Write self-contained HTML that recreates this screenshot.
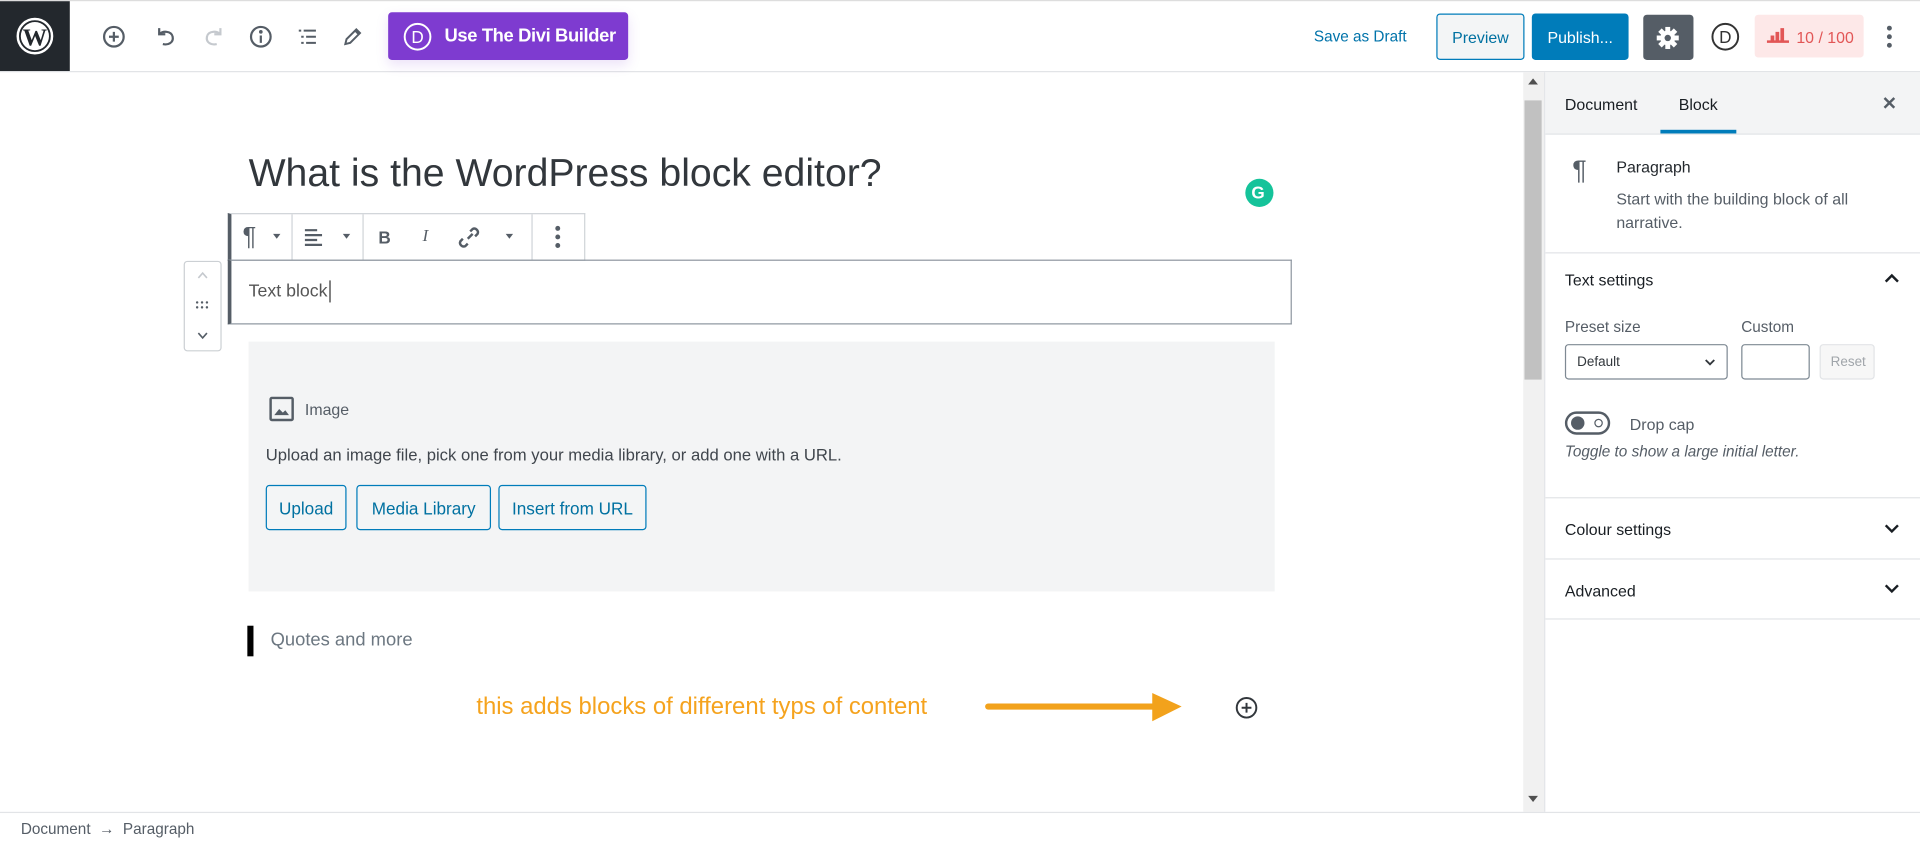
<!DOCTYPE html>
<html><head><meta charset="utf-8"><style>
*{box-sizing:border-box;margin:0;padding:0}
html,body{width:1920px;height:842px;overflow:hidden;background:#fff}
#w{position:absolute;left:0;top:0;width:1568px;height:688px;transform:scale(1.22449);transform-origin:0 0;font-family:"Liberation Sans",sans-serif;color:#23282d}
.a{position:absolute}
.t{position:absolute;white-space:nowrap;line-height:1}
svg{position:absolute;overflow:visible}
.btn{position:absolute;border:1px solid #007cba;border-radius:3px;color:#0071a1;font-size:14px;display:flex;align-items:center;justify-content:center;background:#f3f5f6}
.hr{position:absolute;left:1262px;width:306px;height:1px;background:#e2e4e7}
</style></head><body><div id="w">
<div class="a" style="left:0;top:0;width:1568px;height:1px;background:#ddd"></div>
<div class="a" style="left:0;top:58px;width:1568px;height:1px;background:#e2e4e7"></div>
<div class="a" style="left:0;top:1px;width:57px;height:57px;background:#23282d"></div>
<svg style="left:13px;top:14px" width="31" height="31" viewBox="0 0 31 31"><circle cx="15.5" cy="15.5" r="14" fill="none" stroke="#fff" stroke-width="2"/><circle cx="15.5" cy="15.5" r="11.5" fill="#fff"/><text x="15.5" y="23" text-anchor="middle" font-family="Liberation Serif" font-weight="bold" font-size="20" fill="#23282d">W</text></svg>
<svg style="left:84px;top:21px" width="18" height="18" viewBox="0 0 18 18" fill="none" stroke="#555d66" stroke-width="1.8"><circle cx="9" cy="9" r="8"/><path d="M9 5v8M5 9h8"/></svg>
<svg style="left:126px;top:21px" width="18" height="18" viewBox="0 0 18 18" fill="none" stroke="#555d66" stroke-width="1.8"><path d="M4 2v5h5"/><path d="M4 7c2-3 10-3 11 2s-4 7-8 6"/></svg>
<svg style="left:166px;top:21px" width="18" height="18" viewBox="0 0 18 18" fill="none" stroke="#c5c9ce" stroke-width="1.8"><path d="M14 2v5H9"/><path d="M14 7c-2-3-10-3-11 2s4 7 8 6"/></svg>
<svg style="left:204px;top:21px" width="18" height="18" viewBox="0 0 18 18" fill="none" stroke="#555d66" stroke-width="1.8"><circle cx="9" cy="9" r="8"/><path d="M9 8v6"/><circle cx="9" cy="5" r=".6" fill="#555d66"/></svg>
<svg style="left:243px;top:22px" width="16" height="16" viewBox="0 0 16 16" stroke="#555d66" stroke-width="1.6"><path d="M1 3h2M5 3h10M3 8h2M7 8h8M3 13h2M7 13h8"/></svg>
<svg style="left:280px;top:22px" width="16" height="16" viewBox="0 0 16 16" fill="none" stroke="#555d66" stroke-width="1.6"><path d="M2 14l1-4 8-8 3 3-8 8zM10 3l3 3"/></svg>
<div class="a" style="left:317px;top:10px;width:196px;height:39px;background:#7e3bd0;border-radius:3px;box-shadow:0 4px 10px rgba(126,59,208,.15)"></div>
<svg style="left:329px;top:18px" width="24" height="24" viewBox="0 0 24 24"><circle cx="12" cy="12" r="10.5" fill="none" stroke="#fff" stroke-width="1.6"/><text x="12" y="17" text-anchor="middle" font-size="14" fill="#fff" font-family="Liberation Sans">D</text></svg>
<div class="t" style="left:363px;top:22px;color:#fff;font-weight:bold;font-size:15px;letter-spacing:-0.3px">Use The Divi Builder</div>
<div class="t" style="left:1073px;top:24px;color:#0073aa;font-size:12.5px">Save as Draft</div>
<div class="btn" style="left:1173px;top:11px;width:72px;height:38px;font-size:13px">Preview</div>
<div class="btn" style="left:1251px;top:11px;width:79px;height:38px;background:#007cba;color:#fff;font-size:13px">Publish...</div>
<div class="a" style="left:1342px;top:12px;width:41px;height:37px;background:#555d66;border-radius:3px"></div>
<svg style="left:1352px;top:21px" width="20" height="20" viewBox="0 0 20 20"><g fill="#fff"><circle cx="10" cy="10" r="6"/><rect x="8" y="1" width="4" height="18"/><rect x="1" y="8" width="18" height="4"/><rect x="8" y="1" width="4" height="18" transform="rotate(45 10 10)"/><rect x="8" y="1" width="4" height="18" transform="rotate(-45 10 10)"/></g><circle cx="10" cy="10" r="2.6" fill="#555d66"/></svg>
<svg style="left:1397px;top:18px" width="24" height="24" viewBox="0 0 24 24"><circle cx="12" cy="12" r="10.5" fill="none" stroke="#333" stroke-width="1.6"/><text x="12" y="17" text-anchor="middle" font-size="14" fill="#333">D</text></svg>
<div class="a" style="left:1433px;top:12px;width:89px;height:35px;background:#fde8e8;border-radius:3px"></div>
<svg style="left:1443px;top:23px" width="18" height="12" viewBox="0 0 18 12" fill="#e25656"><path d="M0 10h18v2H0zM3 6h3v4H3zM7 3h3v7H7zM11 0h3v10h-3z"/></svg>
<div class="t" style="left:1467px;top:24px;color:#e25656;font-size:13px">10 / 100</div>
<svg style="left:1540px;top:20px" width="6" height="20"><circle cx="3" cy="3" r="2" fill="#555d66"/><circle cx="3" cy="10" r="2" fill="#555d66"/><circle cx="3" cy="17" r="2" fill="#555d66"/></svg>

<div class="a" style="left:1244px;top:59px;width:17px;height:604px;background:#f1f1f1"></div>
<div class="a" style="left:1245px;top:82px;width:14px;height:228px;background:#c1c1c1"></div>
<svg style="left:1248px;top:64px" width="8" height="6"><path d="M0 5L4 0L8 5z" fill="#505050"/></svg>
<svg style="left:1248px;top:650px" width="8" height="6"><path d="M0 0L4 5L8 0z" fill="#505050"/></svg>

<div class="a" style="left:1261px;top:59px;width:1px;height:604px;background:#e2e4e7"></div>
<div class="a" style="left:1262px;top:59px;width:306px;height:51px;background:#f3f4f5"></div>
<div class="hr" style="top:109px"></div>
<div class="t" style="left:1278px;top:79px;font-size:13px;color:#191e23">Document</div>
<div class="t" style="left:1371px;top:79px;font-size:13px;color:#191e23">Block</div>
<div class="a" style="left:1356px;top:106px;width:62px;height:3px;background:#007cba"></div>
<svg style="left:1538px;top:79px" width="10" height="10" stroke="#555d66" stroke-width="2"><path d="M1 1l8 8M9 1l-8 8"/></svg>
<div class="t" style="left:1284px;top:128px;font-size:22px;color:#555d66">¶</div>
<div class="t" style="left:1320px;top:130px;font-size:13px;color:#23282d">Paragraph</div>
<div class="t" style="left:1320px;top:153px;font-size:13px;color:#555d66;line-height:19px;white-space:normal;width:200px">Start with the building block of all narrative.</div>
<div class="hr" style="top:206px"></div>
<div class="t" style="left:1278px;top:222px;font-size:13px;color:#191e23">Text settings</div>
<svg style="left:1539px;top:223px" width="12" height="8" fill="none" stroke="#191e23" stroke-width="2"><path d="M1 7l5-5 5 5"/></svg>
<div class="t" style="left:1278px;top:261px;font-size:12.5px;color:#555d66">Preset size</div>
<div class="t" style="left:1422px;top:261px;font-size:12.5px;color:#555d66">Custom</div>
<div class="a" style="left:1278px;top:281px;width:133px;height:29px;border:1px solid #7e8993;border-radius:3px"></div>
<div class="t" style="left:1288px;top:291px;font-size:11px;color:#32373c">Default</div>
<svg style="left:1392px;top:293px" width="9" height="6" fill="none" stroke="#32373c" stroke-width="1.5"><path d="M1 1l3.5 3.5L8 1"/></svg>
<div class="a" style="left:1422px;top:281px;width:56px;height:29px;border:1px solid #7e8993;border-radius:3px"></div>
<div class="a" style="left:1486px;top:281px;width:45px;height:29px;border:1px solid #e2e4e7;border-radius:3px;background:#f7f7f7"></div>
<div class="t" style="left:1495px;top:291px;font-size:11px;color:#a0a5aa">Reset</div>
<div class="a" style="left:1278px;top:336px;width:37px;height:19px;border:2px solid #555d66;border-radius:10px"></div>
<div class="a" style="left:1283px;top:340px;width:11px;height:11px;border-radius:50%;background:#555d66"></div>
<div class="a" style="left:1302px;top:342px;width:7px;height:7px;border-radius:50%;border:1.5px solid #555d66"></div>
<div class="t" style="left:1331px;top:340px;font-size:13px;color:#555d66">Drop cap</div>
<div class="t" style="left:1278px;top:363px;font-size:12.5px;font-style:italic;color:#555d66">Toggle to show a large initial letter.</div>
<div class="hr" style="top:406px"></div>
<div class="t" style="left:1278px;top:426px;font-size:13px;color:#191e23">Colour settings</div>
<svg style="left:1539px;top:428px" width="12" height="8" fill="none" stroke="#191e23" stroke-width="2"><path d="M1 1l5 5 5-5"/></svg>
<div class="hr" style="top:456px"></div>
<div class="t" style="left:1278px;top:476px;font-size:13px;color:#191e23">Advanced</div>
<svg style="left:1539px;top:477px" width="12" height="8" fill="none" stroke="#191e23" stroke-width="2"><path d="M1 1l5 5 5-5"/></svg>
<div class="hr" style="top:505px"></div>

<div class="a" style="left:0;top:663px;width:1568px;height:1px;background:#e2e4e7"></div>
<div class="t" style="left:17px;top:671px;font-size:12.5px;color:#555d66">Document &nbsp;→&nbsp; Paragraph</div>

<div class="t" style="left:203px;top:125px;font-size:32px;color:#32373c">What is the WordPress block editor?</div>
<div class="a" style="left:1017px;top:146px;width:23px;height:23px;border-radius:50%;background:#15c39a"></div>
<div class="t" style="left:1022px;top:150px;font-size:14px;color:#fff;font-weight:bold">G</div>
<div class="a" style="left:186px;top:174px;width:292px;height:39px;border:1px solid #d0d4d8;border-left:3px solid #555d66;background:#fff"></div>
<div class="a" style="left:238px;top:175px;width:1px;height:37px;background:#d0d4d8"></div>
<div class="a" style="left:296px;top:175px;width:1px;height:37px;background:#d0d4d8"></div>
<div class="a" style="left:434px;top:175px;width:1px;height:37px;background:#d0d4d8"></div>
<div class="t" style="left:198px;top:183px;font-size:21px;color:#555d66">¶</div>
<svg style="left:223px;top:191px" width="6" height="4"><path d="M0 0h6L3 4z" fill="#555d66"/></svg>
<svg style="left:249px;top:186px" width="14" height="14" stroke="#555d66" stroke-width="1.8"><path d="M0 2h10M0 6h14M0 10h10M0 14h14"/></svg>
<svg style="left:280px;top:191px" width="6" height="4"><path d="M0 0h6L3 4z" fill="#555d66"/></svg>
<div class="t" style="left:309px;top:187px;font-size:14px;font-weight:bold;color:#555d66">B</div>
<div class="t" style="left:345px;top:187px;font-size:14px;font-style:italic;font-family:'Liberation Serif';color:#555d66">I</div>
<svg style="left:374px;top:185px" width="18" height="18" fill="none" stroke="#555d66" stroke-width="2"><path d="M8 10l4-4M10 4l2-2a3 3 0 014 4l-2 2M8 14l-2 2a3 3 0 01-4-4l2-2"/></svg>
<svg style="left:413px;top:191px" width="6" height="4"><path d="M0 0h6L3 4z" fill="#555d66"/></svg>
<svg style="left:453px;top:184px" width="5" height="20"><circle cx="2.5" cy="2.5" r="2" fill="#555d66"/><circle cx="2.5" cy="9.5" r="2" fill="#555d66"/><circle cx="2.5" cy="16.5" r="2" fill="#555d66"/></svg>
<div class="a" style="left:186px;top:212px;width:869px;height:53px;border:1px solid #8f98a1;border-left:3px solid #555d66"></div>
<div class="t" style="left:203px;top:231px;font-size:14.5px;color:#555">Text block</div>
<div class="a" style="left:269px;top:229px;width:1px;height:18px;background:#333"></div>
<div class="a" style="left:150px;top:213px;width:31px;height:74px;border:1px solid #ccd0d4;border-radius:3px;background:#fff"></div>
<svg style="left:161px;top:222px" width="9" height="6" fill="none" stroke="#c5c9ce" stroke-width="1.3"><path d="M1 5l3.5-4L8 5"/></svg>
<svg style="left:160px;top:246px" width="10" height="8" fill="#555d66"><circle cx="1" cy="1" r="1"/><circle cx="5" cy="1" r="1"/><circle cx="9" cy="1" r="1"/><circle cx="1" cy="5" r="1"/><circle cx="5" cy="5" r="1"/><circle cx="9" cy="5" r="1"/></svg>
<svg style="left:161px;top:271px" width="9" height="6" fill="none" stroke="#555d66" stroke-width="1.3"><path d="M1 1l3.5 4L8 1"/></svg>

<div class="a" style="left:203px;top:279px;width:838px;height:204px;background:#f3f4f5"></div>
<svg style="left:220px;top:324px" width="20" height="20" fill="none" stroke="#555d66" stroke-width="2"><rect x="1" y="1" width="18" height="18" rx="1"/><path d="M4 15l4-5 3 3 2-2 3 4z" fill="#555d66" stroke="none"/></svg>
<div class="t" style="left:249px;top:328px;font-size:13px;color:#555d66">Image</div>
<div class="t" style="left:217px;top:365px;font-size:13.6px;color:#40464d">Upload an image file, pick one from your media library, or add one with a URL.</div>
<div class="btn" style="left:217px;top:396px;width:66px;height:37px">Upload</div>
<div class="btn" style="left:291px;top:396px;width:110px;height:37px">Media Library</div>
<div class="btn" style="left:407px;top:396px;width:121px;height:37px">Insert from URL</div>
<div class="a" style="left:202px;top:511px;width:5px;height:25px;background:#000"></div>
<div class="t" style="left:221px;top:515px;font-size:15px;color:#6c7781">Quotes and more</div>
<div class="t" style="left:389px;top:568px;font-size:19.5px;color:#f5a31e">this adds blocks of different typs of content</div>
<svg style="left:805px;top:564px" width="160" height="28"><path d="M2 13H138" stroke="#f2a21c" stroke-width="5" stroke-linecap="round"/><path d="M136 2L160 13L136 25z" fill="#f2a21c"/></svg>
<svg style="left:1009px;top:569px" width="18" height="18" fill="none" stroke="#32373c" stroke-width="1.6"><circle cx="9" cy="9" r="8"/><path d="M9 5v8M5 9h8"/></svg>
</div></body></html>
